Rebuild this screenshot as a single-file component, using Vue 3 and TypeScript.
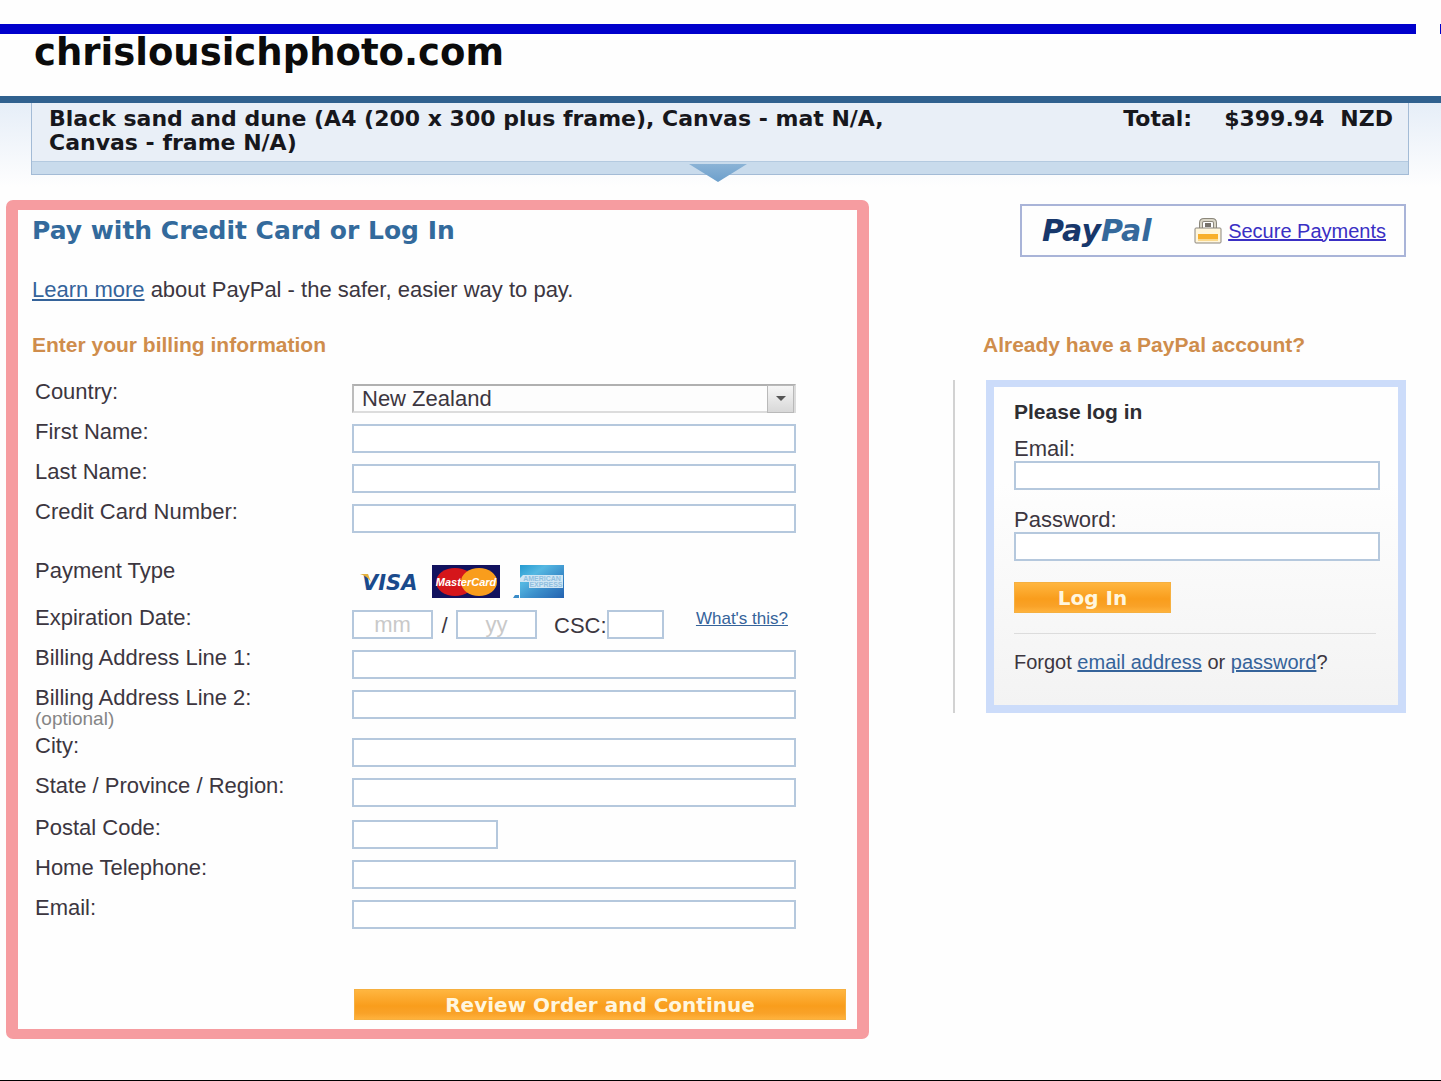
<script setup lang="ts">
import { ref } from 'vue'

interface Field {
  id: string
  label: string
  kind: 'select' | 'text' | 'cards' | 'expiry'
  note?: string
  rowClass?: string
}

const fields: Field[] = [
  { id: 'country', label: 'Country:', kind: 'select' },
  { id: 'first-name', label: 'First Name:', kind: 'text' },
  { id: 'last-name', label: 'Last Name:', kind: 'text' },
  { id: 'card-number', label: 'Credit Card Number:', kind: 'text', rowClass: 'group-end' },
  { id: 'payment-type', label: 'Payment Type', kind: 'cards', rowClass: 'cards-row' },
  { id: 'exp-month', label: 'Expiration Date:', kind: 'expiry' },
  { id: 'address1', label: 'Billing Address Line 1:', kind: 'text' },
  { id: 'address2', label: 'Billing Address Line 2:', kind: 'text', note: '(optional)', rowClass: 'tall' },
  { id: 'city', label: 'City:', kind: 'text' },
  { id: 'region', label: 'State / Province / Region:', kind: 'text' },
  { id: 'postal', label: 'Postal Code:', kind: 'text', rowClass: 'short' },
  { id: 'phone', label: 'Home Telephone:', kind: 'text' },
  { id: 'email', label: 'Email:', kind: 'text' },
]

const country = ref('New Zealand')
</script>

<template>
  <div class="page">
    <div class="topline"><span class="bar"></span><span class="tick"></span></div>

    <header class="merchant">
      <h1>chrislousichphoto.com</h1>
    </header>

    <div class="content">
      <section class="summary">
        <div class="summary-body">
          <p class="item">Black sand and dune (A4 (200 x 300 plus frame), Canvas - mat N/A, Canvas - frame N/A)</p>
          <p class="total"><span>Total:</span><span class="amount">$399.94</span><span>NZD</span></p>
        </div>
        <div class="summary-strip"></div>
        <svg class="arrow" viewBox="0 0 58 18" aria-hidden="true">
          <defs>
            <linearGradient id="arrowFill" x1="0" y1="0" x2="0" y2="1">
              <stop offset="0" stop-color="#8bb3d6" />
              <stop offset="1" stop-color="#6c9fcb" />
            </linearGradient>
          </defs>
          <path d="M0 0H58L29 18Z" fill="url(#arrowFill)" />
        </svg>
      </section>

      <main class="columns">
        <form class="billing" @submit.prevent>
          <h2>Pay with Credit Card or Log In</h2>
          <p class="intro"><a href="#learn">Learn more</a> about PayPal - the safer, easier way to pay.</p>
          <h3>Enter your billing information</h3>

          <div class="rows">
            <div v-for="f in fields" :key="f.id" class="row" :class="f.rowClass">
              <div class="name">
                <span v-if="f.kind === 'cards'">{{ f.label }}</span>
                <label v-else :for="f.id">{{ f.label }}</label>
                <small v-if="f.note">{{ f.note }}</small>
              </div>

              <div v-if="f.kind === 'select'" class="field select">
                <select :id="f.id" v-model="country">
                  <option>New Zealand</option>
                  <option>Australia</option>
                </select>
                <span class="drop" aria-hidden="true">
                  <svg viewBox="0 0 10 6"><path d="M0 0H10L5 5Z" fill="#555" /></svg>
                </span>
              </div>

              <div v-else-if="f.kind === 'cards'" class="field cards">
                <svg class="visa" viewBox="0 0 64 33" role="img" aria-label="Visa">
                  <text x="2" y="25" class="visa-text">VISA</text>
                  <path d="M0 9H8L11 17Q7 11 0 9Z" fill="#e5b13c" />
                </svg>
                <svg class="mastercard" viewBox="0 0 68 33" role="img" aria-label="MasterCard">
                  <rect width="68" height="33" fill="#12125e" />
                  <ellipse cx="23" cy="17" rx="19" ry="14" fill="#d5161b" />
                  <ellipse cx="47" cy="17" rx="18" ry="14" fill="#f99d1c" />
                  <text x="34" y="21" text-anchor="middle" class="mc-text">MasterCard</text>
                </svg>
                <svg class="amex" viewBox="0 0 51 33" role="img" aria-label="American Express">
                  <defs>
                    <linearGradient id="amexFill" x1="0" y1="0" x2="1" y2="1">
                      <stop offset="0" stop-color="#249ad0" />
                      <stop offset="0.3" stop-color="#55b8e2" />
                      <stop offset="0.6" stop-color="#3b8fcb" />
                      <stop offset="1" stop-color="#2462b0" />
                    </linearGradient>
                  </defs>
                  <rect x="7" width="44" height="33" fill="url(#amexFill)" />
                  <path d="M0 33L2 30H6V33Z" fill="#3a8cc8" />
                  <path d="M7 13L10 10H50V23H16V17H7Z" fill="#cfe6f4" />
                  <text x="29" y="16" text-anchor="middle" class="amex-text">AMERICAN</text>
                  <text x="33" y="22" text-anchor="middle" class="amex-text">EXPRESS</text>
                </svg>
              </div>

              <div v-else-if="f.kind === 'expiry'" class="field expiry">
                <input :id="f.id" class="date" type="text" placeholder="mm" />
                <span class="slash">/</span>
                <input class="date" type="text" placeholder="yy" aria-label="Expiration year" />
                <label class="csc-label" for="csc">CSC:</label>
                <input id="csc" class="csc" type="text" />
                <a class="whats" href="#csc-help">What's this?</a>
              </div>

              <div v-else class="field">
                <input :id="f.id" type="text" />
              </div>
            </div>
          </div>

          <button class="orange review" type="submit">Review Order and Continue</button>
        </form>

        <aside class="side">
          <div class="secure">
            <span class="logo"><span class="pay">Pay</span><span class="pal">Pal</span></span>
            <svg class="lock" viewBox="0 0 28 26" aria-hidden="true">
              <path d="M7 12V5Q7 2 10 2H18Q21 2 21 5V12" fill="none" stroke="#8b877b" stroke-width="4" />
              <path d="M7 11V5Q7 2 10 2H18Q21 2 21 5V11" fill="none" stroke="#d9d5c6" stroke-width="2" />
              <rect x="11" y="5" width="6" height="4" fill="#76726a" />
              <rect x="1" y="10" width="26" height="15" rx="1" fill="#fff6dc" stroke="#8a857c" />
              <rect x="4" y="16" width="20" height="5" fill="#f8b02c" />
              <rect x="4" y="21" width="20" height="2" fill="#fbd98c" />
            </svg>
            <a href="#secure">Secure Payments</a>
          </div>

          <h3>Already have a PayPal account?</h3>

          <div class="login-wrap">
            <form class="login" @submit.prevent>
              <h4>Please log in</h4>
              <label for="login-email">Email:</label>
              <input id="login-email" type="text" />
              <label for="login-password">Password:</label>
              <input id="login-password" type="password" />
              <button class="orange" type="submit">Log In</button>
              <hr />
              <p>Forgot <a href="#email">email address</a> or <a href="#password">password</a>?</p>
            </form>
          </div>
        </aside>
      </main>
    </div>
  </div>
</template>

<style>
body {
  background: #fefefe;
}
</style>

<style scoped>
* {
  box-sizing: border-box;
}
h1, h2, h3, h4, p {
  margin: 0;
}
.page {
  display: flex;
  flex-direction: column;
  min-height: 100vh;
  border-bottom: 1px solid #000;
  font-family: "Liberation Sans", Arial, sans-serif;
  font-size: 22px;
  line-height: 24px;
  color: #3c3640;
}
.topline {
  display: flex;
  gap: 24px;
  padding-top: 24px;
}
.bar {
  flex: 1;
  height: 10px;
  background: #0000cc;
}
.tick {
  width: 1px;
  height: 10px;
  background: #0000cc;
}
.merchant {
  height: 69px;
  padding-left: 34px;
  border-bottom: 7px solid #30618f;
}
.merchant h1 {
  font: bold 37px/38px "DejaVu Sans", Verdana, sans-serif;
  color: #0b0b0b;
}
.content {
  flex: 1;
  background: linear-gradient(#e6eef8, #fefefe 84px);
}
.summary {
  position: relative;
  margin: 0 32px 0 31px;
  border: 1px solid #a3bbd6;
  border-top: 0;
}
.summary-body {
  display: flex;
  justify-content: space-between;
  height: 59px;
  padding: 4px 15px 0 17px;
  background: #e9eff7;
  border-bottom: 1px solid #b4cae0;
  font: bold 22px/24px "DejaVu Sans", Verdana, sans-serif;
  color: #17171c;
}
.item {
  flex: 0 1 860px;
}
.total {
  display: flex;
  gap: 16px;
  white-space: nowrap;
}
.amount {
  margin-left: 16px;
}
.summary-strip {
  height: 12px;
  background: #c9dbec;
}
.arrow {
  position: absolute;
  left: 50%;
  bottom: -8px;
  width: 58px;
  height: 18px;
  margin-left: -31px;
}
.columns {
  display: grid;
  grid-template-columns: 863fr 453fr;
  gap: 84px;
  align-items: start;
  padding: 25px 35px 40px 6px;
}
.billing {
  padding: 9px 11px 9px 14px;
  border: 10px solid #f69ca0;
  border-width: 10px 12px;
  border-radius: 7px;
  background: #fefefe;
}
h2 {
  font: bold 25px/24px "DejaVu Sans", Verdana, sans-serif;
  color: #336a9c;
}
a {
  color: #35639a;
}
.intro {
  margin-top: 35px;
}
h3 {
  font-size: 21px;
  line-height: 24px;
  color: #cf8d4c;
}
.billing h3 {
  margin-top: 31px;
}
.rows {
  margin-top: 23px;
  padding: 0 50px 0 3px;
}
.row {
  display: flex;
  height: 40px;
}
.row.group-end {
  margin-bottom: 19px;
}
.row.tall {
  height: 48px;
}
.row.cards-row {
  height: 47px;
}
.row.short {
  margin-top: 2px;
}
.name {
  flex: 0 0 317px;
}
.name label,
.name small {
  display: block;
}
.name small {
  font-size: 19px;
  line-height: 18px;
  color: #858585;
}
.field {
  flex: 1;
  padding-top: 4px;
}
input {
  display: block;
  width: 100%;
  height: 29px;
  padding: 0 6px;
  border: 2px solid #b5c8dd;
  border-radius: 0;
  background: #fff;
  font: inherit;
  outline: 0;
}
.short input {
  width: 146px;
}
.select {
  position: relative;
}
select {
  display: block;
  width: 100%;
  height: 29px;
  padding: 0 32px 0 8px;
  border: 2px solid #dcdcdc;
  border-top-color: #b0b0b0;
  border-left-color: #bcbcbc;
  border-radius: 0;
  background: #fdfdfd;
  appearance: none;
  font: inherit;
  color: #3c3640;
}
.drop {
  position: absolute;
  top: 5px;
  right: 2px;
  display: flex;
  align-items: center;
  justify-content: center;
  width: 27px;
  height: 28px;
  border: 1px solid #b9b9b9;
  background: linear-gradient(#f6f6f6, #d8d8d8);
  pointer-events: none;
}
.drop svg {
  width: 10px;
  height: 6px;
}
.cards {
  display: flex;
  padding: 6px 0 0 8px;
}
.cards svg {
  height: 33px;
}
.visa {
  width: 64px;
}
.visa-text {
  font: italic bold 21px "DejaVu Sans", Verdana, sans-serif;
  fill: #1a4a8c;
}
.mastercard {
  width: 68px;
  margin-left: 8px;
}
.mc-text {
  font: italic bold 11px "Liberation Sans", sans-serif;
  fill: #fff;
}
.amex {
  width: 51px;
  margin-left: 13px;
}
.amex-text {
  font: bold 7px "Liberation Sans", sans-serif;
  fill: #8fbfdf;
}
.expiry {
  display: flex;
  align-items: flex-start;
}
.expiry .date {
  width: 81px;
  text-align: center;
}
.date::placeholder {
  color: #c9c9c9;
  opacity: 1;
}
.slash {
  width: 23px;
  padding-top: 4px;
  text-align: center;
}
.csc-label {
  margin-left: 17px;
  padding-top: 4px;
}
.expiry .csc {
  width: 57px;
}
.whats {
  margin-left: auto;
  padding-right: 8px;
  font-size: 17px;
  line-height: 18px;
}
.orange {
  display: block;
  height: 31px;
  padding: 0;
  border: 1px solid #f6b040;
  border-radius: 0;
  background: linear-gradient(#ffb640, #f99d1c 55%, #f9a228 80%, #ffb23c);
  font: bold 20px/28px "DejaVu Sans", Verdana, sans-serif;
  color: #fff6de;
}
.review {
  width: calc(100% - 322px);
  margin: 53px 0 0 322px;
}
.side {
  padding-top: 4px;
}
.secure {
  display: flex;
  align-items: center;
  width: 386px;
  height: 53px;
  margin-left: auto;
  padding: 0 18px 0 20px;
  border: 2px solid #a9b4d8;
  background: #fefefe;
}
.logo {
  font: italic bold 30px/32px "DejaVu Sans", Verdana, sans-serif;
}
.pay {
  color: #17376b;
}
.pal {
  color: #35699c;
}
.lock {
  width: 28px;
  height: 26px;
  margin-left: auto;
}
.secure a {
  margin-left: 6px;
  font-size: 20px;
  color: #3a2fc4;
}
.side h3 {
  margin: 76px 0 0 30px;
}
.login-wrap {
  margin-top: 23px;
  padding-left: 31px;
  border-left: 2px solid #d2d2d2;
}
.login {
  height: 333px;
  padding: 13px 18px 0 20px;
  border: 8px solid #ccdcfa;
  border-top-width: 7px;
  background: linear-gradient(#fefefe 30%, #f3f3f3);
}
.login h4 {
  font-size: 21px;
  line-height: 24px;
  color: #2e2e33;
}
.login label {
  display: block;
  margin-top: 13px;
  line-height: 24px;
}
.login input + label {
  margin-top: 18px;
}
.login .orange {
  width: 157px;
  margin-top: 21px;
}
hr {
  height: 1px;
  margin: 20px 4px 16px 0;
  border: 0;
  background: #dcdcdc;
}
.login p {
  font-size: 20px;
}
</style>
